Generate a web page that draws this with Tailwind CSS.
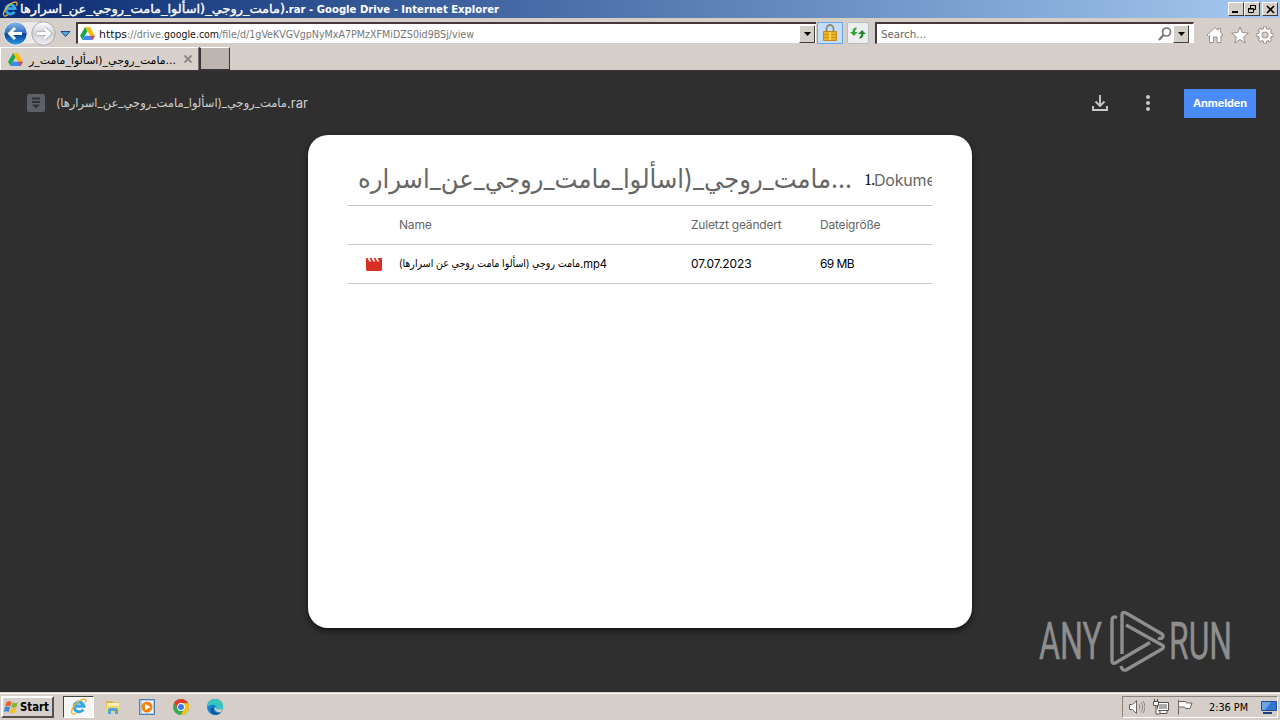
<!DOCTYPE html>
<html lang="de">

<head>
    <meta charset="UTF-8">
    <meta name="viewport" content="width=device-width, initial-scale=1.0">
    <script src="https://cdn.jsdelivr.net/npm/@tailwindcss/browser@4"></script>
    <title>Google Drive</title>
</head>

<body class="w-[1280px] h-[720px] overflow-hidden flex flex-col bg-[#2f2f2f] font-['DejaVu_Sans_Condensed','DejaVu_Sans',sans-serif] text-[11px] text-black">
    <!-- shared icons -->
    <svg class="hidden">
        <symbol id="drive" viewBox="0 0 16 14">
            <path d="M5.4 0h5.2L16 9.3h-5.2z" fill="#fbbc04" />
            <path d="M5.4 0L0 9.3 2.6 14 8 4.7z" fill="#20a455" />
            <path d="M5.2 9.3H16L13.4 14H2.6z" fill="#4285f4" />
            <path d="M16 9.3h-5.2l2.6 4.7z" fill="#ea4335" />
        </symbol>
        <symbol id="ie" viewBox="0 0 18 18">
            <path d="M14 12.200a5.200 5.200 0 1 1 .7-3.600H4.600" fill="none" stroke="#35a6e6" stroke-width="3.200" />
            <path d="M2.300 16.500C-.5 12.500 8.500 1.200 15.500 1.300c2 .2 1.600 2.500.8 4" fill="none" stroke="#f0b92c" stroke-width="1.400" />
            <path d="M2.300 16.500c1.100.7 3 .1 4.300-1" fill="none" stroke="#f0b92c" stroke-width="1.400" />
        </symbol>
    </svg>

    <!-- title bar -->
    <div class="flex-none h-[18px] flex items-center bg-linear-to-r from-[#0c2a72] to-[#a6caf0] pl-[2px] pr-[2px]">
        <svg class="size-[16px]"><use href="#ie" /></svg>
        <svg class="ml-[2px] h-[18px] w-[490px] overflow-visible" fill="#fff" font-weight="bold" font-size="11">
            <text x="0" y="13" font-size="12" font-weight="normal" stroke="#fff" stroke-width=".3" textLength="265" lengthAdjust="spacingAndGlyphs">&#x2067;مامت_روجي_(اسألوا_مامت_روجي_عن_اسرارها&#x2069;)</text>
            <text x="265" y="13" textLength="214" lengthAdjust="spacingAndGlyphs">.rar - Google Drive - Internet Explorer</text>
        </svg>
        <div class="ml-auto flex items-center">
            <div class="w-4 h-[14px] bg-[#d4d0c8] border border-t-white border-l-white border-r-[#404040] border-b-[#404040] flex items-end pl-[3px] pb-[2px]"><div class="w-[6px] h-[2px] bg-black"></div></div>
            <div class="w-4 h-[14px] bg-[#d4d0c8] border border-t-white border-l-white border-r-[#404040] border-b-[#404040] grid place-items-center">
                <svg class="w-[10px] h-[10px]" viewBox="0 0 10 10" fill="none" stroke="#000"><path d="M3.500 4V1.500h5v4H7M3 1.500h6M1.500 4.500h5v4h-5zM1 5h6" /></svg>
            </div>
            <div class="ml-[2px] w-4 h-[14px] bg-[#d4d0c8] border border-t-white border-l-white border-r-[#404040] border-b-[#404040] grid place-items-center">
                <svg class="size-[9px]" viewBox="0 0 9 9"><path d="M1 1l7 7M8 1L1 8" stroke="#000" stroke-width="1.600" /></svg>
            </div>
        </div>
    </div>

    <!-- address row -->
    <div class="flex-none h-[29px] bg-[#d6cec8] border-t border-[#d4d0c0] flex items-start pt-[3px]">
        <svg class="w-[60px] h-[26px] -mt-[1px]" viewBox="0 0 60 26">
            <defs>
                <linearGradient id="b" x1="0" y1="0" x2="0" y2="1"><stop offset="0" stop-color="#8fb9ea" /><stop offset=".48" stop-color="#2f6dbe" /><stop offset=".52" stop-color="#0c3f94" /><stop offset="1" stop-color="#2fa0ea" /></linearGradient>
                <linearGradient id="f" x1="0" y1="0" x2="0" y2="1"><stop offset="0" stop-color="#fff" /><stop offset=".5" stop-color="#d0d1d5" /><stop offset="1" stop-color="#eef0f3" /></linearGradient>
            </defs>
            <path d="M15 1.500h28v21H15z" fill="#eeebe9" />
            <circle cx="15.500" cy="12.500" r="11.700" fill="url(#b)" stroke="#e9eef8" />
            <circle cx="43.500" cy="12.500" r="11.700" fill="url(#f)" stroke="#a9abb0" />
            <path d="M22 12.500H10M15 7l-5.500 5.500L15 18" fill="none" stroke="#fff" stroke-width="2.800" />
            <path d="M37 12.500h12M44 7l5.500 5.500L44 18" fill="none" stroke="#b0b2b6" stroke-width="4.500" />
            <path d="M37 12.500h12M44 7l5.500 5.500L44 18" fill="none" stroke="#fff" stroke-width="2.800" />
        </svg>
        <svg class="w-[11px] h-[6px] mt-[9px]" viewBox="0 0 11 6"><path d="M1 .5h9L5.500 5.500z" fill="#58a8dc" stroke="#1b4b86" /></svg>
        <div class="ml-[5px] w-[740px] h-[22px] bg-white border-t-2 border-l-2 border-t-[#44383c] border-l-[#44383c] border-b border-b-[#d6cec8] flex items-center pl-[2px]">
            <svg class="w-[15px] h-[13px]"><use href="#drive" /></svg>
            <svg class="ml-[4px] w-[380px] h-[18px] overflow-visible" font-size="11" fill="#777">
                <text x="0" y="13" fill="#111" textLength="28" lengthAdjust="spacingAndGlyphs">https</text>
                <text x="28" y="13" textLength="37" lengthAdjust="spacingAndGlyphs">://drive.</text>
                <text x="65" y="13" fill="#111" textLength="55" lengthAdjust="spacingAndGlyphs">google.com</text>
                <text x="120" y="13" textLength="255" lengthAdjust="spacingAndGlyphs">/file/d/1gVeKVGVgpNyMxA7PMzXFMiDZS0id9BSj/view</text>
            </svg>
            <div class="ml-auto mr-[1px] w-4 h-[18px] bg-[#d4d0c8] border border-t-white border-l-white border-r-[#404040] border-b-[#404040] grid place-items-center">
                <svg class="w-[7px] h-[4px]" viewBox="0 0 7 4"><path d="M0 0h7L3.500 4z" /></svg>
            </div>
        </div>
        <div class="ml-[1px] w-[26px] h-[22px] bg-[#c6ddf8] border border-[#6ba6e6] grid place-items-center">
            <svg class="w-[14px] h-[18px]" viewBox="0 0 14 18">
                <path d="M3.500 8V4.500a3.500 3.500 0 0 1 7 0V8" fill="none" stroke="#8e8776" stroke-width="1.800" />
                <path d="M.5 7.500h13v9H.5z" fill="#eeb01e" stroke="#c08a1c" /><path d="M1 10.500h12M1 13.500h12" stroke="#c9921c" /><path d="M7 8v8" stroke="#fbd65a" stroke-width="2" />
            </svg>
        </div>
        <div class="ml-[4px] w-[22px] h-[22px] bg-[#eceef0] border border-[#b4bcc4] rounded-xs grid place-items-center">
            <svg class="w-[16px] h-[14px]" viewBox="0 0 16 14"><path d="M0 6h2.500c0-3 1.500-4.500 4-4.800v2C5.300 3.500 5 4.500 5 6h2.800L4 10z" fill="#37a03b" /><path d="M16 8h-2.500c0 3-1.500 4.500-4 4.800v-2C10.700 10.500 11 9.500 11 8H8.200L12 4z" fill="#258a2c" /></svg>
        </div>
        <div class="ml-[6px] w-[319px] h-[22px] bg-white border-t-2 border-l-2 border-t-[#44383c] border-l-[#44383c] border-b border-b-[#d6cec8] border-r border-r-white flex items-center pl-[4px]">
            <svg class="w-[46px] h-[18px] overflow-visible" font-size="11" fill="#666"><text x="0" y="13" textLength="45" lengthAdjust="spacingAndGlyphs">Search...</text></svg>
            <svg class="ml-auto w-[14px] h-[14px]" viewBox="0 0 14 14" fill="none" stroke="#777"><circle cx="8.500" cy="5" r="4" stroke-width="1.700" /><path d="M5.500 8L1 13" stroke-width="2.200" /></svg>
            <div class="ml-[1px] mr-[4px] w-4 h-[18px] bg-[#d4d0c8] border border-t-white border-l-white border-r-[#404040] border-b-[#404040] grid place-items-center">
                <svg class="w-[7px] h-[4px]" viewBox="0 0 7 4"><path d="M0 0h7L3.500 4z" /></svg>
            </div>
        </div>
        <div class="ml-[12px] mt-[4px] flex gap-[7px]">
            <svg class="size-[18px]" viewBox="0 0 18 18" fill="#fff" stroke="#97928f"><path d="M1 9l8-7.500 3 2.800V2.500h2.500v4L17 9l-1 1.500-1-.9v6.900h-4V11H7.500v5.500h-4V9.600l-1 .9z" /></svg>
            <svg class="size-[18px]" viewBox="0 0 18 18" fill="#fff" stroke="#97928f"><path d="M9 1l2.300 5.600 6 .4-4.600 3.900 1.500 5.900L9 13.600l-5.200 3.200 1.500-5.900L.7 7l6-.4z" /></svg>
            <svg class="size-[18px]" viewBox="0 0 18 18" fill="none"><path d="M9 .5v17M.5 9h17M3 3l12 12M15 3L3 15" stroke="#97928f" stroke-width="4" /><circle cx="9" cy="9" r="4.800" stroke="#97928f" stroke-width="4.500" fill="#d6cec8" /><path d="M9 1.300v3M9 13.700v3M1.300 9h3M13.700 9h3M3.600 3.600l2 2M12.400 12.400l2 2M14.400 3.600l-2 2M5.600 12.400l-2 2" stroke="#fff" stroke-width="2.200" /><circle cx="9" cy="9" r="4.800" stroke="#fff" stroke-width="2.600" /></svg>
        </div>
    </div>

    <!-- tabs -->
    <div class="flex-none h-[24px] bg-[#d6cec8] border-b border-[#3a3436] flex">
        <div class="w-[199px] bg-[#d8d1cb] border-t border-l border-t-white border-l-white border-r border-r-[#777] flex items-center pl-[7px]">
            <svg class="w-[15px] h-[13px]"><use href="#drive" /></svg>
            <svg class="ml-[6px] w-[148px] h-[22px] overflow-visible" font-size="11"><text x="0" y="16" textLength="147" lengthAdjust="spacingAndGlyphs">مامت_روجي_(اسألوا_مامت_ر...</text></svg>
            <svg class="ml-[7px] size-[8px]" viewBox="0 0 8 8"><path d="M.5.5l7 7M7.500.5l-7 7" stroke="#8a8480" stroke-width="1.900" /></svg>
        </div>
        <div class="w-[31px] h-[23px] bg-[#bdb5b0] border-t border-t-white border-l-2 border-l-[#3a3436] border-r border-r-[#3a3436] border-b border-b-[#3a3436]"></div>
    </div>

    <!-- drive viewer -->
    <main class="flex-1 relative flex flex-col font-[Inter,'DejaVu_Sans',sans-serif]">
        <header class="flex-none h-16 flex items-center pl-[27px] pr-6">
            <svg class="size-[18px]" viewBox="0 0 18 18"><rect width="18" height="18" rx="2" fill="#5c6167" /><path d="M5 4.500h8M5 8h8" stroke="#303236" stroke-width="1.800" /><path d="M5 10.500h8l-4 4z" fill="#303236" /></svg>
            <svg class="ml-[11px] w-[254px] h-[24px] overflow-visible" font-size="12" fill="#d0d0d0">
                <text x="0" y="16" textLength="231" lengthAdjust="spacingAndGlyphs">&#x2067;مامت_روجي_(اسألوا_مامت_روجي_عن_اسرارها)&#x2069;</text>
                <text x="231" y="17" font-size="13" textLength="21" lengthAdjust="spacingAndGlyphs">.rar</text>
            </svg>
            <svg class="ml-auto size-[16px]" viewBox="0 0 16 16" fill="none" stroke="#c8c8c8" stroke-width="1.900"><path d="M8 0v11M3.500 6.500L8 11l4.500-4.500M1 11v4h14v-4" /></svg>
            <svg class="ml-[38px] w-[4px] h-[16px]" viewBox="0 0 4 16" fill="#c8c8c8"><circle cx="2" cy="2" r="2" /><circle cx="2" cy="8" r="2" /><circle cx="2" cy="14" r="2" /></svg>
            <button class="ml-[34px] w-[72px] h-[29px] pt-px bg-[#4a8cf7] text-white font-bold text-[11px] -tracking-[0.1px]">Anmelden</button>
        </header>

        <section class="mx-auto w-[664px] h-[493px] rounded-[20px] bg-white shadow-[0_3px_6px_rgba(0,0,0,0.6)] px-10 pt-[23px] text-xs">
            <div class="h-12 border-b border-[#c6c6c6] flex overflow-hidden">
                <svg class="flex-none ml-[10px] w-[496px] h-[47px] overflow-visible" font-size="26" fill="#666"><text x="0" y="30" textLength="494" lengthAdjust="spacingAndGlyphs">مامت_روجي_(اسألوا_مامت_روجي_عن_اسراره...</text></svg>
                <p class="flex-none ml-[10px] mt-[10px] flex text-base leading-6 text-[#666] whitespace-nowrap -tracking-[0.2px]"><span class="w-[10px] font-['Liberation_Serif',serif] -tracking-[0.8px] text-black">1.</span><span>Dokument</span></p>
            </div>
            <div class="h-[39px] border-b border-[#c6c6c6] grid grid-cols-[51px_292px_129px_1fr] items-center text-[#666] -tracking-[0.2px]">
                <span></span><span>Name</span><span>Zuletzt geändert</span><span>Dateigröße</span>
            </div>
            <div class="h-[39px] border-b border-[#c6c6c6] grid grid-cols-[51px_292px_129px_1fr] items-center">
                <svg class="ml-[18px] w-[16px] h-[14px] -mt-px" viewBox="0 0 16 14"><path d="M1.500 1l1.800 3.500h2L3.500 1h2l1.800 3.500h2L7.500 1h2l1.800 3.500h2L11.500 1H16v11.500q0 1.500-1.500 1.500h-13Q0 14 0 12.500V1z" fill="#d93025" /></svg>
                <svg class="w-[210px] h-[20px] overflow-visible tracking-normal" font-size="11">
                    <text x="0" y="13" textLength="181" lengthAdjust="spacingAndGlyphs">&#x2067;مامت روجي (اسألوا مامت روجي عن اسرارها)&#x2069;</text>
                    <text x="181" y="14" font-size="12" textLength="27" lengthAdjust="spacingAndGlyphs">.mp4</text>
                </svg>
                <span class="-tracking-[0.1px]">07.07.2023</span><span class="-tracking-[0.6px]">69 MB</span>
            </div>
        </section>

        <!-- watermark, floats over the viewer -->
        <svg class="absolute right-[47px] bottom-[20px] w-[195px] h-[64px]" viewBox="0 0 195 64" font-family="Roboto" font-weight="400" font-size="52" fill="#8e8e8e">
            <text x="1" y="51" textLength="63" lengthAdjust="spacingAndGlyphs" stroke="#8e8e8e" stroke-width=".5">ANY</text>
            <text x="131" y="51" textLength="63" lengthAdjust="spacingAndGlyphs" stroke="#8e8e8e" stroke-width=".5">RUN</text>
            <g fill="none" stroke="#8e8e8e" stroke-width="3.400" stroke-linejoin="round">
                <path d="M79 9.500q-5-2-5 3v41q1 3 4 1l34-20" />
                <path d="M84 46V7q0-4 4-2l36 21q2 2 0 4-2 1-4 0" />
                <path d="M88 17l36 20q3 2 0 4L88 62q-4 1-5-4" />
            </g>
        </svg>
    </main>

    <!-- taskbar -->
    <footer class="flex-none h-[28px] bg-[#d6cec8] border-t border-t-[#d6cec8] shadow-[inset_0_1px_0_#fff] flex items-center pl-[1px] pr-[2px]">
        <div class="w-[53px] h-[22px] border-2 border-t-white border-l-white border-r-[#55504c] border-b-[#55504c] flex items-center pl-[1px] gap-[1px]">
            <svg class="flex-none w-[15px] h-[14px]" viewBox="0 0 15 14"><path d="M2.500 2q2.500-1.500 5 0L6.200 6.500q-2.500-1.500-5 0z" fill="#e8602c" /><path d="M8.300 2.500q2.500 1.500 5.500 0L12.400 7q-2.500 1.500-5.200 0z" fill="#7fb83c" /><path d="M1 7.300q2.500-1.500 5 0L4.700 12q-2.500-1.500-5 0z" fill="#3f87d8" /><path d="M7 7.800q2.500 1.500 5.200 0L11 12.500q-2.500 1.500-5.300 0z" fill="#f6bf2c" /></svg>
            <svg class="w-[29px] h-[16px] overflow-visible" font-weight="bold" font-size="11.500"><text x="0" y="12" textLength="29" lengthAdjust="spacingAndGlyphs">Start</text></svg>
        </div>
        <div class="ml-[9px] w-[31px] h-[22px] bg-[#f8f7f6] border border-t-[#444] border-l-[#444] border-r-white border-b-white grid place-items-center"><svg class="size-[17px]"><use href="#ie" /></svg></div>
        <div class="ml-[11px] flex items-center gap-[18px]">
            <svg class="size-[16px]" viewBox="0 0 16 16"><path d="M1 2h6l1 1.500h6V12H1z" fill="#d9b64e" /><path d="M2 4h12v4H2z" fill="#fbeeb0" /><path d="M1 7h14v6H1z" fill="#f0d473" /><path d="M3 15v-4q0-2 2-2h6q2 0 2 2v4h-3v-3H6v3z" fill="#4fa6d4" /></svg>
            <svg class="size-[16px]" viewBox="0 0 16 16"><rect x=".5" y=".5" width="15" height="15" fill="#a9cbe8" stroke="#4d83b4" /><rect x="3" y="2" width="11" height="12" fill="#f4f8fb" /><circle cx="8" cy="8" r="5.500" fill="#f18213" /><path d="M6 4.800L11.500 8 6 11.200z" fill="#fff" /></svg>
            <svg class="size-[16px]" viewBox="0 0 16 16"><circle cx="8" cy="8" r="8" fill="#34a853" /><path d="M1.100 4A8 8 0 0 1 14.900 4L8 4.500 4.500 10z" fill="#e33b2e" /><path d="M8 4.300h7.100A8 8 0 0 1 7.700 16l3.500-6z" fill="#fbc116" /><circle cx="8" cy="8" r="3.900" fill="#fff" /><circle cx="8" cy="8" r="3" fill="#3b7ded" /></svg>
            <svg class="size-[16px]" viewBox="0 0 16 16"><circle cx="8" cy="8" r="8" fill="#1681cf" /><path d="M0 7.500C.5 3 4 0 8 0c5 0 8 3.500 8 7 0 3-2.500 4-5 4-2 0-2.500-1-1.500-2C10 6.500 7 4 0 7.500z" fill="#36c6bd" /><path d="M6.500 8C5 12 9 15 13.500 13.800 10 17.500 4 16 3.500 11 3.500 9 5 8 6.500 8z" fill="#10519c" /><path d="M9.500 9c-1 1.500 1.500 2.500 6 .5l-1.700 3.600C10 14 6.500 11 8 8z" fill="#d6cec8" /></svg>
        </div>
        <div class="ml-auto w-[156px] h-[22px] border border-t-[#8a8480] border-l-[#8a8480] border-r-white border-b-white flex items-center pl-[6px]">
            <svg class="size-[16px]" viewBox="0 0 16 16" fill="#fff" stroke="#666"><path d="M.5 5.500h3l4-4v13l-4-4h-3z" /><path d="M10 5.500q2 2.500 0 5M12 3.500q3.500 4.500 0 9M14 2q4 6 0 12" fill="none" stroke="#888" /></svg>
            <svg class="ml-[8px] size-[16px]" viewBox="0 0 16 16" fill="#fff" stroke="#555"><path d="M4.500 3.500h11v8h-11z" /><path d="M6.500 5.500h7v4h-7z" fill="#aaa" stroke="#aaa" /><path d="M7 12v2.500h7V12M.5 2.500h5v4h-5zM1.500 0v2M4.500 0v2M3 7v8h4" /></svg>
            <svg class="ml-[8px] size-[16px]" viewBox="0 0 16 16" fill="#fff" stroke="#666"><path d="M1.500 1v14.500M1.500 2.500h7l1 1.500h5.500l-2 5.500H8.500l-1-1.500h-6z" /></svg>
            <svg class="ml-[16px] w-[40px] h-[16px] overflow-visible" font-size="11"><text x="0" y="12" textLength="39" lengthAdjust="spacingAndGlyphs">2:36 PM</text></svg>
            <svg class="ml-[12px] w-[16px] h-[14px]" viewBox="0 0 16 14"><path d="M.5 1.500h15v9H.5z" fill="#3277cf" stroke="#1d4c98" /><path d="M1 2h9L4 10H1z" fill="#6da4e6" /><path d="M2 13h9" stroke="#1c3e7c" stroke-width="2" /></svg>
        </div>
    </footer>
</body>

</html>
